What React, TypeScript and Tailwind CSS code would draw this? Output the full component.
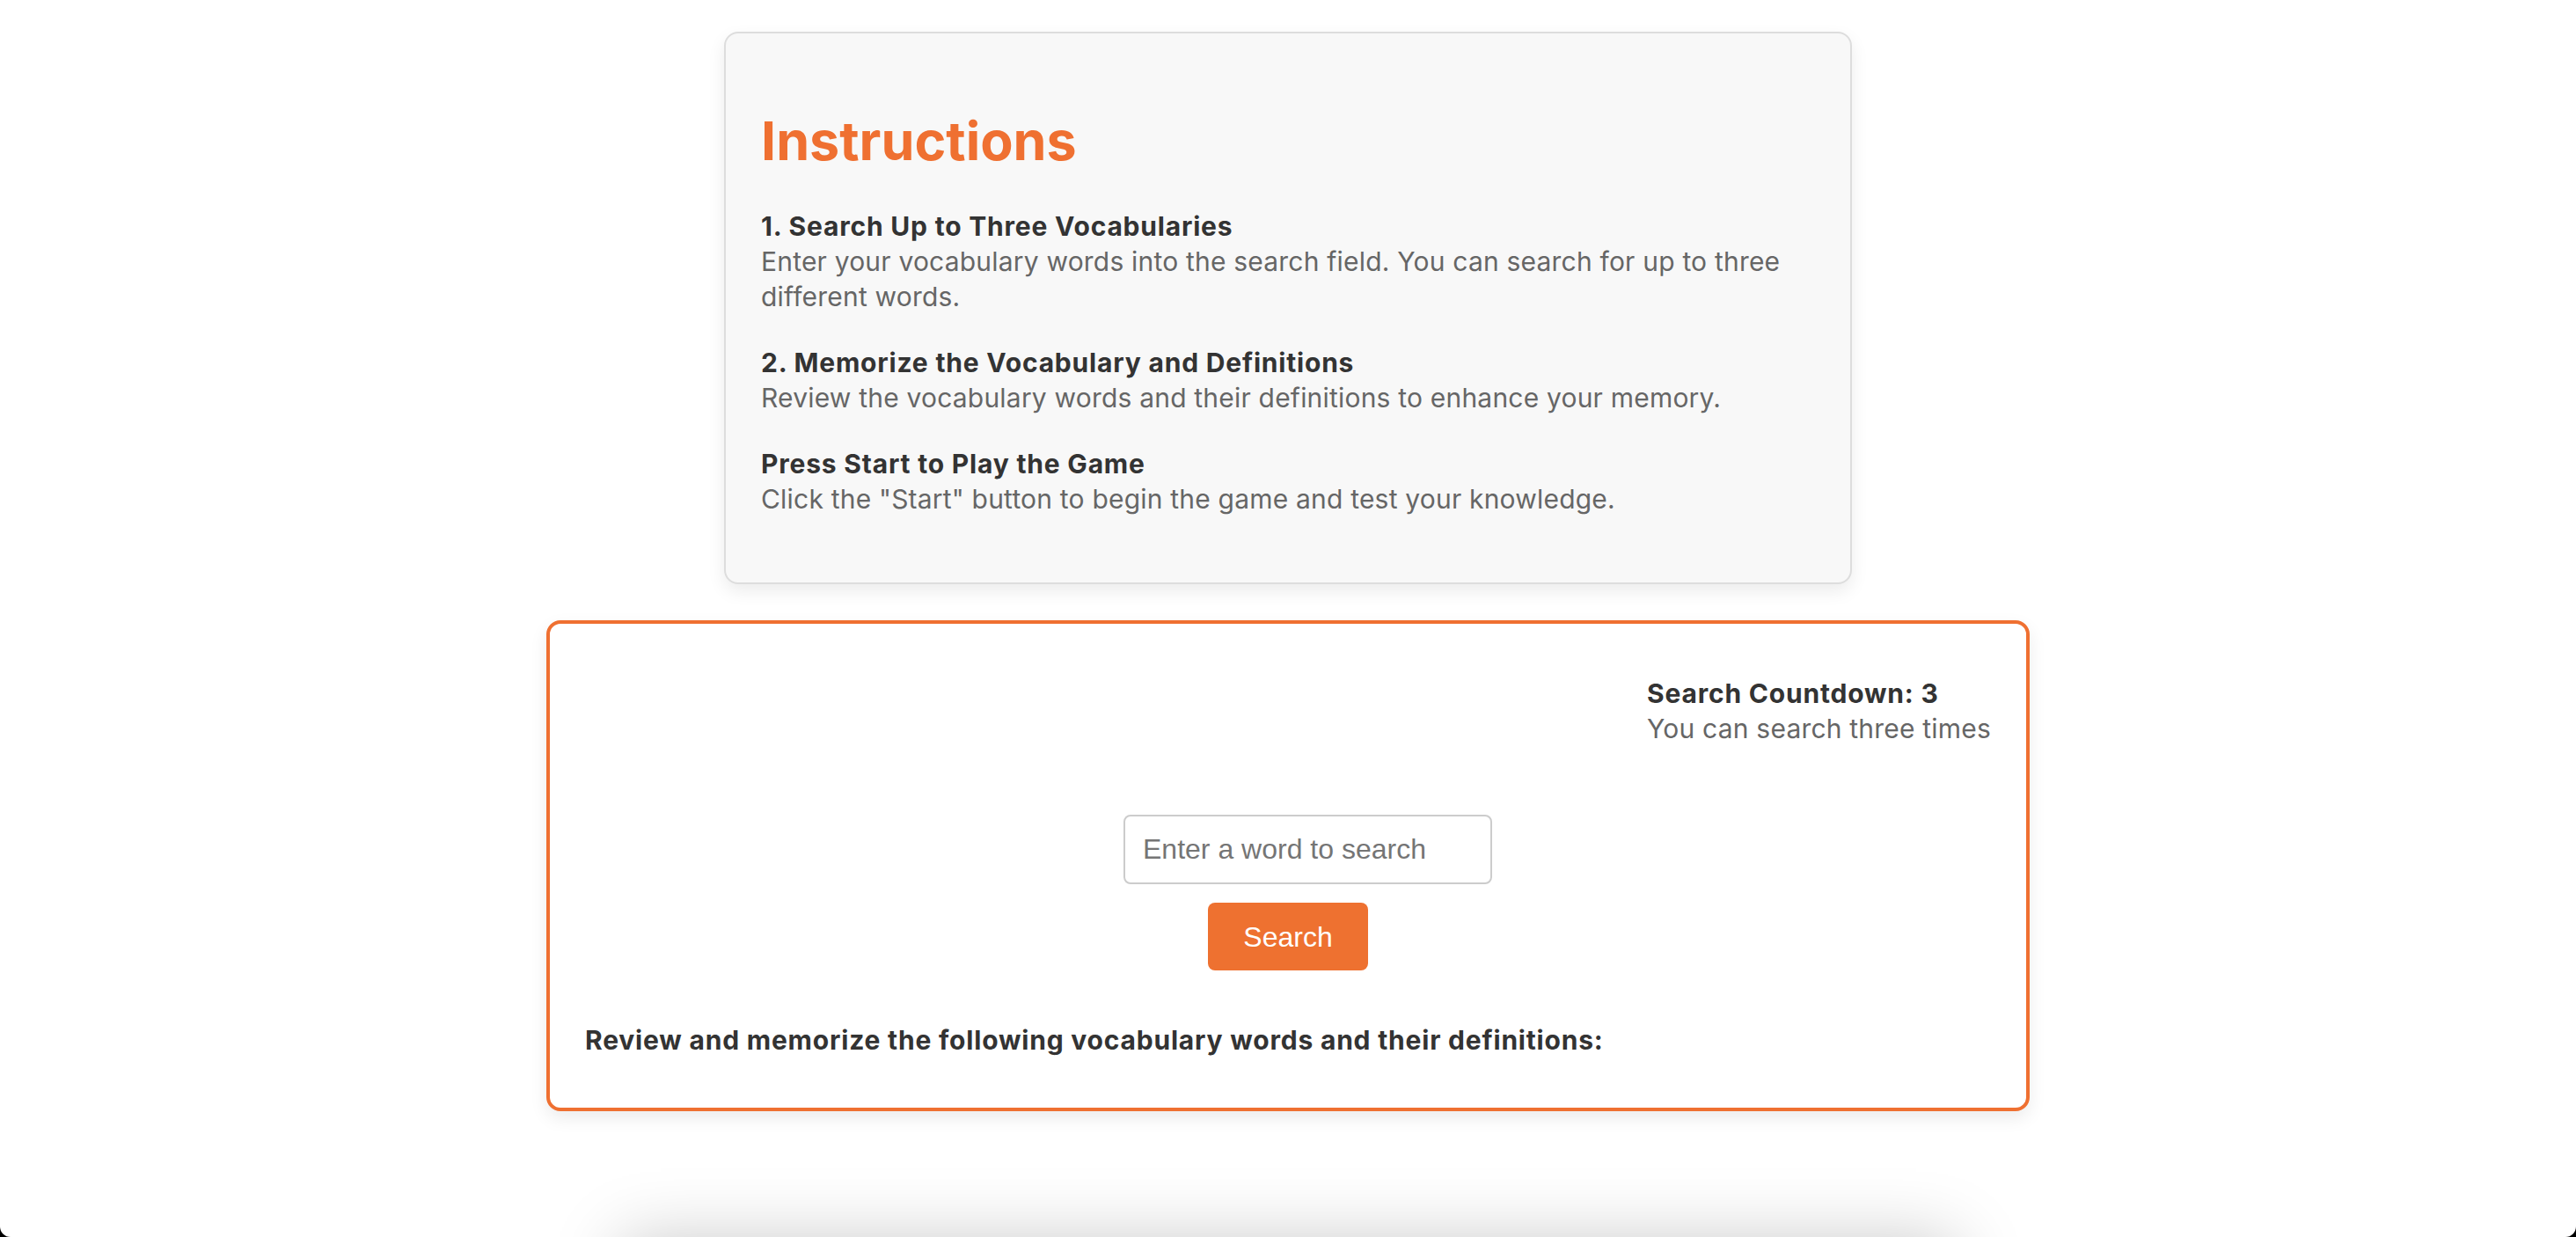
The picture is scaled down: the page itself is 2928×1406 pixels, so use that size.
import React from "react";

const sans = { fontFamily: "Inter, 'Noto Sans', sans-serif" };

function Item({ title, children }: { title: string; children: React.ReactNode }) {
  return (
    <div className="flex flex-col">
      <div className="text-[30px] leading-[40px] tracking-[0.8px] font-bold text-[#333333]">{title}</div>
      <div className="text-[30px] leading-[40px] tracking-[0.2px] font-normal text-[#666666]">{children}</div>
    </div>
  );
}

export default function App() {
  return (
    <div className="w-full h-[1406px] bg-black overflow-hidden">
      <div
        className="w-full h-[1406px] bg-white rounded-b-[12px] overflow-hidden flex flex-col items-center"
        style={sans}
      >
        {/* Instructions card */}
        <div className="mt-[36px] w-[1282px] bg-[#f8f8f8] border-2 border-[#dddddd] rounded-[16px] shadow-[0_8px_20px_rgba(0,0,0,0.08)] px-[40px] pt-[40px] pb-[75px] flex flex-col">
          <h1 className="mt-[44px] mb-[38px] text-[61px] leading-[77px] font-bold text-[#ef7031]">
            Instructions
          </h1>
          <div className="flex flex-col gap-[35px]">
            <Item title="1. Search Up to Three Vocabularies">
              Enter your vocabulary words into the search field. You can search for up to three
              different words.
            </Item>
            <Item title="2. Memorize the Vocabulary and Definitions">
              Review the vocabulary words and their definitions to enhance your memory.
            </Item>
            <Item title="Press Start to Play the Game">
              Click the "Start" button to begin the game and test your knowledge.
            </Item>
          </div>
        </div>

        {/* Search card */}
        <div className="mt-[41px] w-[1686px] bg-white border-4 border-[#ef7031] rounded-[16px] shadow-[0_8px_20px_rgba(0,0,0,0.08)] px-[40px] pt-[59px] pb-[57px] flex flex-col">
          <div className="flex justify-end">
            <div className="flex flex-col">
              <div className="text-[30px] leading-[40px] tracking-[0.8px] font-bold text-[#333333]">
                Search Countdown: 3
              </div>
              <div className="text-[30px] leading-[40px] tracking-[0.2px] text-[#666666]">
                You can search three times
              </div>
            </div>
          </div>
          <div className="mt-[78px] flex flex-col items-center">
            <input
              type="text"
              placeholder="Enter a word to search"
              className="ml-[45px] w-[419px] h-[79px] border-2 border-[#cccccc] rounded-[8px] px-[20px] text-[32px] text-[#333] placeholder:text-[#757575] bg-white outline-none"
              style={{ fontFamily: "'Liberation Sans', Arial, sans-serif" }}
            />
            <button
              className="mt-[21px] w-[182px] h-[77px] bg-[#ee7130] rounded-[8px] text-white text-[32px]"
              style={{ fontFamily: "'Liberation Sans', Arial, sans-serif" }}
            >
              Search
            </button>
          </div>
          <div className="mt-[59px] text-[30px] leading-[40px] tracking-[0.8px] font-bold text-[#333333]">
            Review and memorize the following vocabulary words and their definitions:
          </div>
        </div>

        {/* Next card, mostly below the fold */}
        <div className="mt-[147px] w-[1515px] h-[400px] shrink-0 bg-white shadow-[0_0_75px_rgba(0,0,0,0.22)]" />
      </div>
    </div>
  );
}
